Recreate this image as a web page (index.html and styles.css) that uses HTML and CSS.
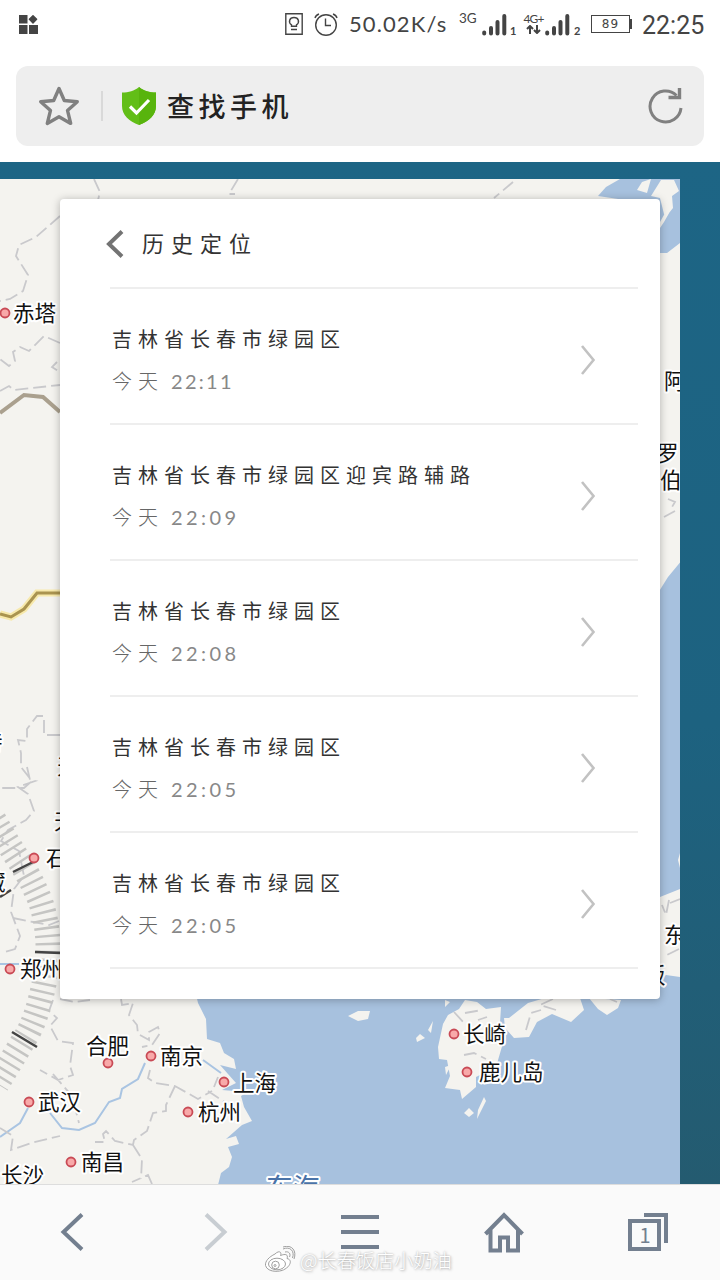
FILE: index.html
```html
<!DOCTYPE html>
<html lang="zh-CN">
<head>
<meta charset="utf-8">
<title>查找手机</title>
<link rel="stylesheet" href="styles.css">
</head>
<body>
<div class="screen">
  <header class="status">
    <svg class="apps" width="19" height="19" viewBox="0 0 19 19"><path d="M0 0h8.500v8.500H0zM0 10h8.500v9H0zM10 10h9v9h-9z"/><path d="M14 .7l3.600 3.600-3.600 3.600-3.600-3.600z" stroke="#444" stroke-width="1.400" stroke-linejoin="round"/></svg>
    <div class="status-right">
      <svg width="18" height="22" viewBox="0 0 18 22" fill="none" stroke="#444" stroke-width="1.400"><path d="M.8.8h16.400v20.400H.8z"/><path d="M6.500 13.300v-1.500C3 9.500 4.300 4.500 9 4.500s6 5 2.500 7.300v1.500zM6 16.500h6"/></svg>
      <svg class="alarm" width="24" height="23" viewBox="0 0 24 23" fill="none" stroke="#444" stroke-width="1.400"><circle cx="12" cy="12" r="10.300"/><path d="M11.500 5.500v7h5.500M1 5c.5-2 2-3.300 4-4M23 5c-.5-2-2-3.300-4-4"/></svg>
      <span class="speed">50.02K/s</span>
      <span class="net">3G</span>
      <svg class="bars" width="25" height="23" viewBox="0 0 25 23"><g stroke="#444" stroke-width="4" stroke-linecap="round"><path d="M2.200 19.500v1M9 15v5.500M15.500 9v11.500M22.300 3v17.500"/></g></svg>
      <span class="sim">1</span>
      <span class="net-stack"><span>4G+</span><svg width="15" height="9" viewBox="0 0 15 9" fill="none" stroke="#444" stroke-width="2"><path d="M4 9V2M1 4l3-3 3 3M11 0v7M8 5l3 3 3-3"/></svg></span>
      <svg class="bars" width="25" height="23" viewBox="0 0 25 23"><g stroke="#444" stroke-width="4" stroke-linecap="round"><path d="M2.200 19.500v1M9 15v5.500M15.500 9v11.500M22.300 3v17.500"/></g></svg>
      <span class="sim sim2">2</span>
      <span class="battery">89</span>
      <span class="clock">22:25</span>
    </div>
  </header>

  <div class="address">
    <svg class="star" width="42" height="40" viewBox="0 0 42 40" fill="none" stroke="#808080" stroke-width="3.400" stroke-linejoin="round"><path d="M21 2.500l5.300 12 13 1.200-9.800 8.700 3.200 13L21 30.800 9.300 37.400l3.200-13-9.800-8.700 13-1.200z"/></svg>
    <i class="bar"></i>
    <svg class="shield" width="34" height="38" viewBox="0 0 34 38"><path d="M17 0c5 4 10 5.500 17 5.500V19c0 9-7 15.500-17 19C7 34.500 0 28 0 19V5.500C7 5.500 12 4 17 0z" fill="#62be17"/><path d="M17 0c5 4 10 5.500 17 5.500V19c0 9-7 15.500-17 19z" fill="#58b40d"/><path d="M8 19.500l6.500 6.500L27 13" fill="none" stroke="#fff" stroke-width="3.200"/></svg>
    <h1>查找手机</h1>
    <svg class="reload" width="36" height="36" viewBox="0 0 36 36" fill="none" stroke="#808080" stroke-width="3"><path d="M33 20A15.500 15.500 0 1 1 28.500 7.500"/><path d="M31.500 0v9.500H20.500"  stroke-width="3.400"/></svg>
  </div>

  <main class="page">
    <svg class="map" width="680" height="1005" viewBox="0 179 680 1005">
      <path class="land" d="M0 179h680v1005H0z"/>
      <path class="sea" d="M195 990l3 13 8 16 1 20 13 4 4 10 10 6 2 10-16-4 16 18-14 7 24 2 5-2-10 6 3 11 8 14-10 4-16 14 10-3 3 8-11 3 4 10-3 10-8 6-3 12h470V553l-20 24-50 80V990z"/>
      <path class="sea" d="M598 196l8-9 14-8h60v64l-13 10h-22v-50z"/>
      <path class="land" d="M642 182l9-3-4 14-10-3zM661 180h13l5 11-7 5 1 12-8 10-5-20-9-2zM660 222l9-16 3 2-8 14-4 6zM660 897l20-8v88l-14-2-6 4zM678 860l2-7v15zM348 1016l10-5 12 0-2 8-10 2zM445 1000l5 2-5 5zM443 1024l5-9 11-6 6-9 12 2 9 7 15-2-1 16 3 20-7 24-20 10 0 10-14 12-2-9-15-2 5-12-3-16-8-1-1-12zM452 1040l8 5-9 11-1-9zM445 1067l6-2-5 10zM416 1038l4-4 5 4-8 4zM428 1030l5-9-2 12zM464 1113l5-5 5 5-5 4zM484 1097l2 4-9 18 1-9zM509 1018l19-15 17-5h35l4 12-13 12-19-8-15 8-8 15-15 1-9-10-1-10zM589 998l32 2-3 8-11 7-9-6z"/>
      <g class="river"><path d="M0 1137l20-14 8-15M50 1113l12 15 17 2 16-7 14-21 11-4 2-9 16-10 7-16M203 1060l18 13M0 964l19 0"/></g>
      <g class="border">
        <path d="M94 179l6 13-2 8M238 179l-9 15h6M513 182l-19 16M60 216l-24 21-17 8-3 11 12 19-5 16-13 8-10 2M60 343l-16-7-15 15-9-4-7 5 2 9-6 5-9-7M57 362l-5 5 8 5M0 391l9-5 5 4 46-5M60 735l-16 0 0-19-7 0-10 13 0 12-9-1 3 13 0 14 11 14-8 7-24 0M27 767l3 13 5 1-17 6 10 7 6 17-8 9-18 10-7 11 18 10 5 25-10 13-3 23 9 24-5 13-10 3M13 918l20 4 16 3 10-4"/>
        <path d="M60 999l15 3 15-2M121 999l1 6 11-2-4 12 8 10 1 9 11 6 0-8 9-5 2 6-8 12-10 2M53 1000l-4 11 8 7-7 8 8 15 15 2-3 23 3 9-15 5-18-10M53 1074l19 22 7 27M150 1070l-2 8 7 5 20 3 23 13 14-8M175 1086l-9 19 0 6-13 2-6 18-13 9-1 5-18-4-9-10-3 3 2 8-10 0M133 1145l9 14-1 20M0 1128l13 8-2 14 20-7 29-7M208 1091l18 12M152 1184l-4-9-16 7M218 1077l-4 10"/>
        <path d="M454 1012l12 13M465 1013l17-3M478 1020l9-3M464 1055l10-2 12 6M526 1030l5-17 10-3M556 1010l-16-5 13-6M610 999l7 3M669 900l-3 15-4-10M679 949l-12 6M668 499l7 3-3 5M664 517l11-6M670 903l10-4"/>
      </g>
      <path class="ridge" d="M-6 820Q10 847 20 862T40 900Q53 938 45 979T25 1038L-3 1084"/>
      <path class="ridge-dark" d="M13 872l24-12M0 897l11-7M35 952l26 1M12 1032l25 15"/>
      <path class="road-brown" d="M0 413l24-18 19 2 17 15"/>
      <path class="road-glow" d="M0 614l11 3 13-8 13-16h23"/><path class="road-gold" d="M0 614l11 3 13-8 13-16h23"/>
      <g class="dots"><circle cx="5" cy="313" r="4.500"/><circle cx="34" cy="858" r="4.500"/><circle cx="10" cy="969" r="4.500"/><circle cx="108" cy="1063" r="4.500"/><circle cx="151" cy="1056" r="4.500"/><circle cx="224" cy="1082" r="4.500"/><circle cx="29" cy="1102" r="4.500"/><circle cx="188" cy="1112" r="4.500"/><circle cx="71" cy="1162" r="4.500"/><circle cx="454" cy="1034" r="4.500"/><circle cx="467" cy="1072" r="4.500"/></g>
      <g class="labels">
        <text x="13" y="321">赤塔</text><text x="-19" y="750">特</text><text x="57" y="774">天</text><text x="54" y="829">天</text><text x="46" y="866">石</text><text x="20" y="977">郑州</text><text x="86" y="1054">合肥</text><text x="160" y="1064">南京</text><text x="233" y="1091">上海</text><text x="38" y="1110">武汉</text><text x="198" y="1120">杭州</text><text x="81" y="1170">南昌</text><text x="1" y="1183">长沙</text><text x="463" y="1042">长崎</text><text x="479" y="1080">鹿儿岛</text><text x="664" y="389">阿</text><text x="657" y="461">罗</text><text x="660" y="488">伯</text><text x="664" y="943">东</text><text x="644" y="983">阪</text><text x="-16" y="890">藏</text>
        <text class="sea-name" x="266" y="1198">东海</text>
      </g>
    </svg>

    <section class="card">
      <div class="card-head">
        <svg width="18" height="28" viewBox="0 0 18 28" fill="none" stroke="#737373" stroke-width="4"><path d="M16 1.500L3 14l13 12.500"/></svg>
        <h2>历史定位</h2>
      </div>
      <ul>
        <li><div><p class="place">吉林省长春市绿园区</p><p class="time">今天<span class="narrow">22:11</span></p></div><svg class="go" width="16" height="30" viewBox="0 0 16 30"><path d="M2 1l11.500 14L2 29"/></svg></li>
        <li><div><p class="place">吉林省长春市绿园区迎宾路辅路</p><p class="time">今天<span>22:09</span></p></div><svg class="go" width="16" height="30" viewBox="0 0 16 30"><path d="M2 1l11.500 14L2 29"/></svg></li>
        <li><div><p class="place">吉林省长春市绿园区</p><p class="time">今天<span>22:08</span></p></div><svg class="go" width="16" height="30" viewBox="0 0 16 30"><path d="M2 1l11.500 14L2 29"/></svg></li>
        <li><div><p class="place">吉林省长春市绿园区</p><p class="time">今天<span>22:05</span></p></div><svg class="go" width="16" height="30" viewBox="0 0 16 30"><path d="M2 1l11.500 14L2 29"/></svg></li>
        <li><div><p class="place">吉林省长春市绿园区</p><p class="time">今天<span>22:05</span></p></div><svg class="go" width="16" height="30" viewBox="0 0 16 30"><path d="M2 1l11.500 14L2 29"/></svg></li>
      </ul>
    </section>
  </main>

  <nav class="toolbar">
    <svg width="48" height="48" viewBox="0 0 48 48"><path d="M34 6.500L15.500 24 34 41.500"/></svg>
    <svg class="off" width="48" height="48" viewBox="0 0 48 48"><path d="M14 6.500L32.500 24 14 41.500"/></svg>
    <svg width="48" height="48" viewBox="0 0 48 48"><path d="M5 9h38M5 24h38M5 39h38"/></svg>
    <svg width="48" height="48" viewBox="0 0 48 48"><path d="M5.500 26L24 7l18.500 19M10.500 22v20.500h9.500V29.500h8v13H38V22"/></svg>
    <span class="tabs"><svg width="48" height="48" viewBox="0 0 48 48"><path d="M6 13h29v28H6zM20 7h22v28"/></svg><b>1</b></span>
  </nav>
  <div class="watermark">
    <svg width="32" height="28" viewBox="0 0 32 28" fill="#fff" stroke="#a0a0a0" stroke-width="1"><path d="M11 8c4-4 7-2 5.500 1.500 5-2 8-1 6.500 3 4 1 4 4 2 7-5 8-22 7.500-23.500 0C1 15 5 11 11 8z"/><ellipse cx="13" cy="18" rx="8.500" ry="5.800"/><circle cx="11.500" cy="19" r="3.800"/><circle cx="11" cy="19.500" r="1"/><path fill="none" d="M19 3c7-3 12 2 9.500 9M21 6c4-1 6 2 4.500 5M19 1c9-3 14 4 11 12"/></svg>
    <span>@长春饭店小奶油</span>
  </div>
</div>
</body>
</html>
```
FILE: styles.css
```css
* { box-sizing: border-box; }
body, h1, h2, p, ul { margin: 0; padding: 0; font-weight: 400; }
ul { list-style: none; }
svg { display: block; flex: none; }
body { font-family: Lato, "Noto Sans CJK SC", sans-serif; color: #333; background: #fff; }
.screen { position: relative; width: 720px; height: 1280px; overflow: hidden; display: flex; flex-direction: column; }

.status { height: 50px; display: flex; align-items: center; justify-content: space-between; padding: 0 15px 2px 19px; color: #444; white-space: nowrap; }
.apps { fill: #444; }
.status-right { display: flex; align-items: center; }
.alarm { margin-left: 11px; }
.speed { width: 98px; margin-left: 11px; font: 22px/30px Lato, sans-serif; letter-spacing: 1.100px; }
.net { width: 18px; margin: -12px 5px 0 12px; font-size: 13.500px; line-height: 14px; }
.sim { width: 6px; margin: 13px 0 0 3px; font: bold 11px/12px Lato, sans-serif; }
.net-stack { width: 19px; margin: -2px 2px 0 8px; display: flex; flex-direction: column; align-items: center; font: 12px/13px Lato, sans-serif; letter-spacing: -.9px; }
.sim2 { width: 8px; margin-left: 4px; }
.battery { position: relative; width: 39px; height: 18px; margin-left: 9px; border: 1.500px solid #444; font: 12px/16px "DejaVu Sans", sans-serif; text-align: center; letter-spacing: 1px; }
.battery::after { content: ""; position: absolute; left: 37px; top: 3px; width: 3px; height: 10px; background: #444; }
.clock { width: 63px; margin: 3px 0 0 12px; font: 25px/30px Roboto, sans-serif; }

.address { flex: none; height: 80px; margin: 16px 16px 16px; padding: 0 20px 0 22px; border-radius: 12px; background: #eee; display: flex; align-items: center; }
.bar { width: 2px; height: 30px; margin: 0 20px 0 21px; background: #d9d9d9; }
.shield { margin-left: -1px; }
.address h1 { flex: 1; margin-left: 11px; font: 500 27px/40px "Noto Sans CJK SC", sans-serif; letter-spacing: 4.500px; color: #222; }

.page { position: relative; height: 1022px; padding-top: 17px; background: linear-gradient(#1d6585, #1d6280 55%, #245b70); }
.map { position: absolute; left: 0; top: 17px; }
.land { fill: #f4f3ef; }
.sea { fill: #a7c1de; }
.river { fill: none; stroke: #a9c4e2; stroke-width: 2; }
.border { fill: none; stroke: #c9c9cc; stroke-width: 1.800; stroke-dasharray: 13 5; }
.ridge { fill: none; stroke: #c5c5c3; stroke-width: 25; stroke-dasharray: 2.500 5.500; }
.ridge-dark { fill: none; stroke: #444; stroke-width: 2.500; }
.road-brown { fill: none; stroke: #aaa08e; stroke-width: 4; }
.road-glow { fill: none; stroke: #f7e9ac; stroke-width: 7; }
.road-gold { fill: none; stroke: #aa9450; stroke-width: 3; }
.dots { fill: #f8a9a9; stroke: #c94a55; stroke-width: 1.800; }
.labels { font: 400 21.500px "Noto Sans CJK SC", sans-serif; fill: #111; stroke: #fff; stroke-width: 4px; paint-order: stroke; stroke-linejoin: round; }
.sea-name { font-size: 27px; fill: #4a73a8; }

.card { position: relative; width: 600px; height: 800px; margin: 20px 0 0 60px; padding: 0 22px 0 50px; border-radius: 4px; background: #fff; box-shadow: 0 1px 8px rgba(0, 0, 0, .28); }
.card-head { height: 90px; margin-left: -4px; display: flex; align-items: center; gap: 18px; }
.card h2 { margin-top: -5px; font: 22px/32px "Noto Sans CJK SC", sans-serif; letter-spacing: 7px; color: #333; }
.card ul { margin-top: -2px; border-top: 2px solid #eee; }
.card li { height: 136px; border-bottom: 2px solid #eee; padding: 7px 42px 0 2px; display: flex; align-items: center; justify-content: space-between; }
.place { font: 20px/42px "Noto Sans CJK SC", sans-serif; letter-spacing: 6px; color: #333; white-space: nowrap; }
.time { font: 300 20px/42px "Noto Sans CJK SC", sans-serif; letter-spacing: 6px; color: #666; display: flex; }
.time span { margin-left: 7px; font-family: Lato, sans-serif; font-weight: 400; letter-spacing: 3.400px; color: #888; }
.time .narrow { letter-spacing: 2.300px; }
.go { fill: none; stroke: #c2c2c2; stroke-width: 2.600; }

.toolbar { flex: none; height: 96px; padding-bottom: 2px; border-top: 1px solid #ddd; background: #fafafa; display: grid; grid-template-columns: repeat(5, 1fr); justify-items: center; align-items: center; fill: none; stroke: #737f8f; stroke-width: 4; }
.toolbar .off { stroke: #c8cdd2; }
.tabs { position: relative; }
.tabs b { position: absolute; left: 15px; top: 14px; width: 12px; text-align: center; font: 20px/26px "Noto Sans CJK SC", sans-serif; color: #737f8f; }
.watermark { position: absolute; left: 264px; top: 1246px; display: flex; align-items: center; gap: 4px; white-space: nowrap; font: 300 19.200px/28px "Noto Sans CJK SC", sans-serif; color: #fff; text-shadow: 0 0 2px #aaa, 1px 1px 3px #bbb; }
```
